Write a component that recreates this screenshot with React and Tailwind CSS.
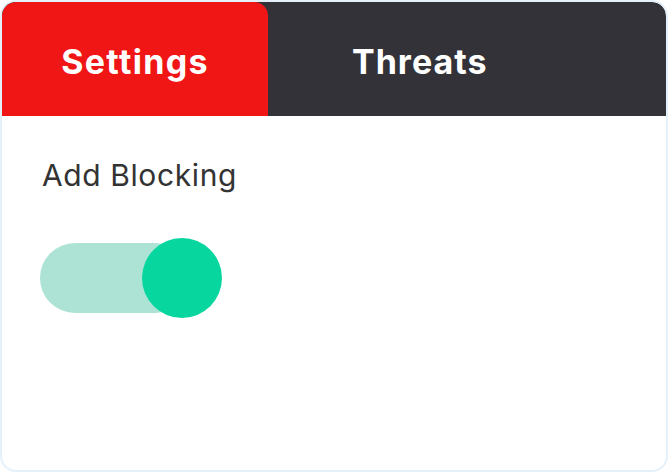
import React, { useState } from 'react';

export default function App() {
  const [tab, setTab] = useState('settings');
  const [on, setOn] = useState(true);

  return (
    <div className="w-[668px] h-[472px] bg-white" style={{ fontFamily: 'Inter, "Noto Sans", sans-serif' }}>
      <div className="w-full h-full rounded-[16px] border-2 border-[#e4f1fb] overflow-hidden flex flex-col">
        {/* Tabs */}
        <div className="flex h-[114px] bg-[#323238] rounded-tr-[14px]">
          <button
            type="button"
            onClick={() => setTab('settings')}
            className={`w-[266px] h-full pt-[4px] rounded-t-[14px] flex items-center justify-center text-white font-bold text-[34px] tracking-[1.3px] ${tab === 'settings' ? 'bg-[#f01616]' : 'bg-[#323238]'}`}
          >
            Settings
          </button>
          <button
            type="button"
            onClick={() => setTab('threats')}
            className={`h-full pt-[4px] pl-[84px] flex items-center text-white font-bold text-[34px] tracking-[1px] ${tab === 'threats' ? 'bg-[#f01616]' : ''}`}
          >
            Threats
          </button>
        </div>

        {/* Body */}
        <div className="flex-1 px-[38px] pt-[44px]">
          <div className="ml-[2px] text-[30px] text-[#333333] leading-none tracking-[0.6px]">Add Blocking</div>
          <div className="relative w-[182px] h-[80px] mt-[48px] cursor-pointer" onClick={() => setOn(!on)}>
            <div className="absolute left-0 top-[5px] w-[150px] h-[70px] rounded-full bg-[#ade3d5]" />
            <div className={`absolute top-0 w-[80px] h-[80px] rounded-full bg-[#07d69f] ${on ? 'left-[102px]' : 'left-0'}`} />
          </div>
        </div>
      </div>
    </div>
  );
}
